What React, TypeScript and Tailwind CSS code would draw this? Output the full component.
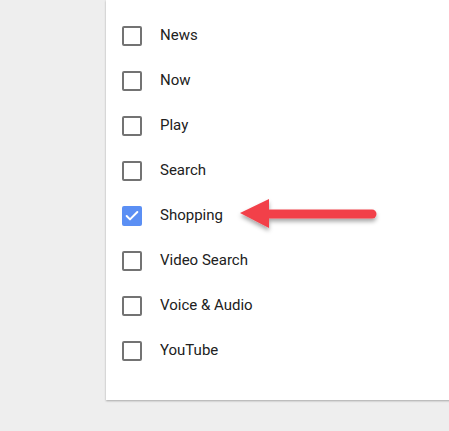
import { Check } from 'lucide-react';

const items = [
  { label: 'News', checked: false },
  { label: 'Now', checked: false },
  { label: 'Play', checked: false },
  { label: 'Search', checked: false },
  { label: 'Shopping', checked: true },
  { label: 'Video Search', checked: false },
  { label: 'Voice & Audio', checked: false },
  { label: 'YouTube', checked: false },
];

export default function App() {
  return (
    <div className="relative h-[431px] w-[449px] overflow-hidden bg-[#eeeeee] font-['Roboto',sans-serif]">
      {/* Card */}
      <div className="ml-[106px] w-[400px] bg-white pl-4 pt-[13px] pb-[27px] shadow-[0_1px_2px_rgba(0,0,0,0.3)]">
        <div className="flex flex-col">
          {items.map((item) => (
            <div key={item.label} className="flex h-[45px] items-center">
              {item.checked ? (
                <div className="flex h-5 w-5 items-center justify-center rounded-[2px] bg-[#5b8ff4]">
                  <Check className="h-4 w-4 text-white" strokeWidth={3} />
                </div>
              ) : (
                <div className="h-5 w-5 rounded-[2px] border-2 border-[#737373]" />
              )}
              <span className="ml-[18px] text-[15px] text-[#212121]">{item.label}</span>
            </div>
          ))}
        </div>
      </div>

      {/* Arrow annotation */}
      <svg
        className="absolute left-[232px] top-[192px]"
        width="156"
        height="46"
        viewBox="0 0 156 46"
      >
        <defs>
          <filter id="sh" x="-20%" y="-40%" width="140%" height="200%">
            <feDropShadow dx="0" dy="3" stdDeviation="2" floodColor="#000" floodOpacity="0.35" />
          </filter>
        </defs>
        <g filter="url(#sh)">
          <line x1="34" y1="22" x2="140" y2="22" stroke="#f2414a" strokeWidth="9" strokeLinecap="round" />
          <polygon points="8,21 37,7 37,36" fill="#f2414a" />
        </g>
      </svg>
    </div>
  );
}
